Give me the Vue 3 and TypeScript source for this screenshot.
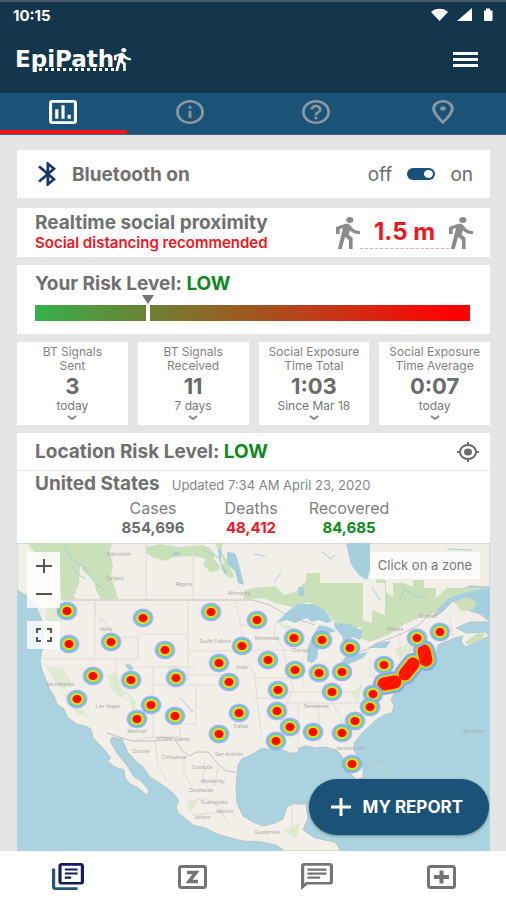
<script setup lang="ts">
import { ref } from 'vue'

interface Tab { id: string; label: string; path: string; box: string }
interface Tile { title: string[]; value: string; period: string }
interface Total { label: string; value: string; tone: string }
interface Label { x: number; y: number; text: string }

const bluetoothOn = ref(true)
const activeTab = ref('stats')
const riskPercent = 26

const walkPath =
  'M13.5 5.5c1.1 0 2-.9 2-2s-.9-2-2-2-2 .9-2 2 .9 2 2 2zM9.8 8.9L7 23h2.1l1.8-8 2.1 2v6h2v-7.5l-2.1-2 .6-3C14.8 12 16.8 13 19 13v-2c-1.9 0-3.5-1-4.3-2.4l-1-1.6c-.4-.6-1-1-1.7-1-.3 0-.5.1-.8.1L6 8.3V13h2V9.6l1.8-.7'

const tabs: Tab[] = [
  { id: 'stats', label: 'Statistics', box: '3 3 18 18', path: 'M19 3H5c-1.1 0-2 .9-2 2v14c0 1.1.9 2 2 2h14c1.1 0 2-.9 2-2V5c0-1.1-.9-2-2-2zm0 16H5V5h14v14zM7 10h2v7H7zm4-3h2v10h-2zm4 7h2v3h-2z' },
  { id: 'info', label: 'Information', box: '2 2 20 20', path: 'M11 7h2v2h-2zm0 4h2v6h-2zm1-9C6.48 2 2 6.48 2 12s4.48 10 10 10 10-4.48 10-10S17.52 2 12 2zm0 18c-4.41 0-8-3.59-8-8s3.59-8 8-8 8 3.59 8 8-3.59 8-8 8z' },
  { id: 'help', label: 'Help', box: '2 2 20 20', path: 'M11 18h2v-2h-2v2zm1-16C6.48 2 2 6.48 2 12s4.48 10 10 10 10-4.48 10-10S17.52 2 12 2zm0 18c-4.41 0-8-3.59-8-8s3.59-8 8-8 8 3.59 8 8-3.59 8-8 8zm0-14c-2.21 0-4 1.79-4 4h2c0-1.1.9-2 2-2s2 .9 2 2c0 2-3 1.75-3 5h2c0-2.25 3-2.5 3-5 0-2.21-1.79-4-4-4z' },
  { id: 'place', label: 'Places', box: '3 2 18 20', path: 'M12 2C8.13 2 5 5.13 5 9c0 5.25 7 13 7 13s7-7.75 7-13c0-3.87-3.13-7-7-7zM7 9c0-2.76 2.24-5 5-5s5 2.24 5 5c0 2.88-2.88 7.19-5 9.88C9.92 16.21 7 11.85 7 9zM12 7.2a1.8 1.8 0 1 0 0 3.6a1.8 1.8 0 1 0 0-3.6z' },
]

const tiles: Tile[] = [
  { title: ['BT Signals', 'Sent'], value: '3', period: 'today' },
  { title: ['BT Signals', 'Received'], value: '11', period: '7 days' },
  { title: ['Social Exposure', 'Time Total'], value: '1:03', period: 'Since Mar 18' },
  { title: ['Social Exposure', 'Time Average'], value: '0:07', period: 'today' },
]

const totals: Total[] = [
  { label: 'Cases', value: '854,696', tone: 'plain' },
  { label: 'Deaths', value: '48,412', tone: 'bad' },
  { label: 'Recovered', value: '84,685', tone: 'good' },
]

const spots: [number, number][] = [
  [67, 611], [143, 618], [211, 612], [257, 620], [69, 644], [111, 642], [165, 650], [242, 646],
  [219, 663], [268, 660], [93, 676], [131, 680], [176, 678], [229, 682], [77, 699], [151, 705],
  [137, 719], [175, 716], [239, 713], [219, 734], [294, 638], [322, 640], [350, 648], [295, 670],
  [319, 673], [342, 672], [384, 665], [278, 690], [332, 692], [277, 711], [373, 694], [370, 707],
  [290, 727], [355, 721], [276, 741], [313, 732], [342, 733], [352, 764], [417, 638], [440, 632],
]

const cluster = 'M384 684L395 682M405 674L413 664M424 651L426 660'
const clusterLayers = [
  { color: '#a09cf2', width: 22 },
  { color: '#5cc4de', width: 19 },
  { color: '#9be03c', width: 17 },
  { color: '#ffd200', width: 15 },
  { color: '#ff1400', width: 13 },
]

const labels: Label[] = [
  { x: 119, y: 556, text: 'Edmonton' }, { x: 115, y: 580, text: 'Calgary' }, { x: 184, y: 586, text: 'Regina' },
  { x: 239, y: 595, text: 'Winnipeg' }, { x: 106, y: 631, text: 'Idaho' }, { x: 215, y: 643, text: 'South Dakota' },
  { x: 242, y: 669, text: 'Iowa' }, { x: 60, y: 686, text: 'Sacramento' }, { x: 108, y: 708, text: 'Las Vegas' },
  { x: 137, y: 733, text: 'Mexicali' }, { x: 173, y: 741, text: 'Ciudad Juárez' }, { x: 141, y: 753, text: 'Sonora' },
  { x: 174, y: 759, text: 'Chihuahua' }, { x: 229, y: 756, text: 'San Antonio' }, { x: 202, y: 769, text: 'Coahuila' },
  { x: 213, y: 783, text: 'Monterrey' }, { x: 201, y: 792, text: 'Zacatecas' }, { x: 214, y: 804, text: 'Guanajuato' },
  { x: 225, y: 813, text: 'México' }, { x: 202, y: 819, text: 'Jalisco' }, { x: 267, y: 834, text: 'Guatemala' },
  { x: 267, y: 640, text: 'Minnesota' }, { x: 301, y: 652, text: 'Chicago' }, { x: 316, y: 708, text: 'Tennessee' },
  { x: 395, y: 631, text: 'Ottawa' }, { x: 428, y: 618, text: 'Québec' },
  { x: 474, y: 733, text: 'Bermuda' }, { x: 350, y: 750, text: 'Jacksonville' }, { x: 241, y: 728, text: 'Dallas' },
]
</script>

<template>
  <div class="app">
    <header class="top">
      <div class="status">
        <span class="clock">10:15</span>
        <svg class="status-icons" viewBox="0 0 62 14" aria-hidden="true">
          <path d="M0 4C4 -0.5 13 -0.5 17 4L8.5 13z" />
          <path d="M26 13L41 0V13z" />
          <path d="M53 2.5h2V0.5h4v2h2.5V12a1 1 0 0 1-1 1h-6.500a1 1 0 0 1-1-1z" />
        </svg>
      </div>
      <div class="brand-row">
        <h1 class="brand">
          <span class="brand-name">EpiPath</span>
          <svg class="brand-walk" viewBox="6 1.5 13 21.5" preserveAspectRatio="none" aria-hidden="true"><path :d="walkPath" /></svg>
        </h1>
        <button class="menu" type="button" aria-label="Menu"><i></i><i></i><i></i></button>
      </div>
    </header>

    <nav class="tabs" aria-label="Sections">
      <button
        v-for="tab in tabs" :key="tab.id" type="button" class="tab"
        :class="{ active: tab.id === activeTab }" :aria-label="tab.label" @click="activeTab = tab.id"
      >
        <svg :viewBox="tab.box" preserveAspectRatio="none"><path fill-rule="evenodd" :d="tab.path" /></svg>
      </button>
    </nav>

    <main class="content">
      <section class="card bluetooth">
        <svg class="bt-icon" viewBox="5 2 12.71 20" preserveAspectRatio="none" aria-hidden="true">
          <path d="M17.71 7.71L12 2h-1v7.59L6.41 5 5 6.41 10.59 12 5 17.59 6.41 19 11 14.41V22h1l5.71-5.71-4.3-4.29 4.3-4.29zM13 5.83l1.88 1.88L13 9.59V5.83zm1.88 10.46L13 18.17v-3.76l1.88 1.88z" />
        </svg>
        <label class="heading" for="bt-switch">Bluetooth on</label>
        <div class="switch-group">
          <span>off</span>
          <input id="bt-switch" v-model="bluetoothOn" class="switch" type="checkbox" role="switch">
          <span>on</span>
        </div>
      </section>

      <section class="card proximity">
        <div>
          <h2 class="heading">Realtime social proximity</h2>
          <p class="advice">Social distancing recommended</p>
        </div>
        <div class="distance">
          <svg class="walker" viewBox="6 1.5 13 21.5" preserveAspectRatio="none" aria-hidden="true"><path :d="walkPath" /></svg>
          <strong>1.5 m</strong>
          <svg class="walker" viewBox="6 1.5 13 21.5" preserveAspectRatio="none" aria-hidden="true"><path :d="walkPath" /></svg>
        </div>
      </section>

      <section class="card risk">
        <h2 class="heading">Your Risk Level: <span class="low">LOW</span></h2>
        <div class="gauge">
          <div class="marker" :style="{ left: riskPercent + '%' }"></div>
        </div>
      </section>

      <section class="tiles">
        <button v-for="tile in tiles" :key="tile.title.join(' ')" type="button" class="tile">
          <span v-for="line in tile.title" :key="line" class="tile-title">{{ line }}</span>
          <strong>{{ tile.value }}</strong>
          <span class="period">{{ tile.period }}</span>
          <svg viewBox="0 0 10 5" aria-hidden="true"><path d="M1 1l4 3 4-3" /></svg>
        </button>
      </section>

      <section class="location">
        <div class="location-head">
          <h2 class="heading">Location Risk Level: <span class="low">LOW</span></h2>
          <button type="button" class="locate" aria-label="Use my location">
            <svg viewBox="0 0 24 20" preserveAspectRatio="none">
              <ellipse cx="12" cy="10" rx="8" ry="7" fill="none" stroke="currentColor" stroke-width="2" />
              <ellipse cx="12" cy="10" rx="4" ry="3.5" />
              <path d="M11 0h2v3h-2zM11 17h2v3h-2zM1 9h3v2H1zM20 9h3v2h-3z" />
            </svg>
          </button>
        </div>
        <div class="region">
          <div class="region-title">
            <h3 class="heading">United States</h3>
            <span>Updated 7:34 AM April 23, 2020</span>
          </div>
          <dl class="totals">
            <div v-for="total in totals" :key="total.label">
              <dt>{{ total.label }}</dt>
              <dd :class="total.tone">{{ total.value }}</dd>
            </div>
          </dl>
        </div>
        <div class="map">
          <svg class="map-art" viewBox="17 543 473 308" preserveAspectRatio="xMidYMid slice" role="img" aria-label="Heat map of the United States">
            <defs>
              <radialGradient id="heat">
                <stop offset="0" stop-color="#e80000" />
                <stop offset="0.36" stop-color="#ff1200" />
                <stop offset="0.45" stop-color="#ffc400" />
                <stop offset="0.55" stop-color="#d0e840" />
                <stop offset="0.66" stop-color="#58d490" />
                <stop offset="0.76" stop-color="#7cc0ec" />
                <stop offset="0.88" stop-color="#9c96f2" stop-opacity="0.75" />
                <stop offset="1" stop-color="#b0a8f6" stop-opacity="0" />
              </radialGradient>
            </defs>
            <path class="land" d="M17 543H490V587L470 586 452 593 441 604 433 617 442 612 452 602 465 602 470 611 480 614 490 622 470 622 456 628 466 633 486 632 489 636 466 647 461 642 463 636 455 638 445 642 438 645 435 655 430 659 420 668 411 675 400 687 395 692 391 699 394 706 392 713 384 715 376 720 363 732 354 743 354 751 360 760 363 768 363 777 357 780 350 773 345 765 342 756 336 750 325 747 316 748 306 746 299 748 297 753 290 753 283 750 273 750 262 748 253 754 242 759 238 765 236 787 237 803 243 816 253 822 263 826 275 823 283 819 287 807 292 804 306 804 308 818 303 830 315 838 335 842 341 851H285L276 845 262 842 243 841 220 835 205 828 193 825 186 819 178 813 176 807 179 801 174 794 167 788 156 781 150 777 143 767 136 761 128 753 122 739 112 737 110 741 117 753 128 767 134 777 140 780 149 790 147 795 137 787 130 784 125 778 124 770 115 767 107 761 111 758 107 753 101 746 93 738 91 729 85 726 77 724 68 718 64 709 57 704 54 696 50 690 46 680 43 673 40 662 42 650 43 635 42 620 38 611 34 603 27 596 17 590z" />
            <g class="forest">
              <path d="M27 543H112L110 552 113 566 111 576 115 588 118 599H101L96 590 94 580 84 572 80 564 79 584 74 596 76 599H61L60 573 50 563 42 556 34 552z" />
              <path d="M146 547l14-3 20 3 22-2 8 3 6 8-3 2 7 8-2 5-8 1-7-8 3-5-12-3-20 1-8 4-12-3-8-5z" />
              <path d="M215 543h8l-2 8 9 15 4 11-5 1-8-9 3-7zM245 590l11-2v11h-13z" />
              <path d="M253 588L275 586 284 595 297 591 303 583H306V573H320V583H363V620L372 623V610L385 615V583H376V579L386 580V592L393 597V583H405L413 587V580H424V588H436V598L447 588H470L490 587 470 591 451 597 434 613 421 617 405 624 390 634 370 642 359 638 361 627 350 628 335 623 325 610 308 602 292 607 275 603 263 598 253 599z" />
              <path d="M454 602l12-5 12 5-5 8-12 1zM465 642l13-9 7 1-4 6-13 5z" />
              <path class="pale" d="M47 603l12-2 5 7-2 14-10 1-4 20-4-2zM98 620l5-3-2 6zM45 665l18 4 10 17-12 3zM107 676l8-5 7 17 6 6-9 3-8-8zM60 691l14 8 15 18-13-4zM167 666l10-1 5 14-9 6zM126 691l10 11-3 9zM393 650l13-6 8 3-10 14zM350 694l13-11-5 20zM275 622l15 4 9 6-14-3zM284 831l17-9-5 17zM187 805l12-8-8 14z" />
            </g>
            <g class="water">
              <path d="M346 543H370V571L367 580 360 576 351 565zM227 552l8 1 4 11 5 21-6-2-3-12-8-7zM218 548l4 3-2 12 7 8-2 4-6-14zM298 587l6 1v8h-5zM172 553l6-2 2 3-7 2z" />
              <path d="M276 623l12-12 10-7 15 0 11 5 8 12-5 2-8-3-8 2-4-4-12 5-8-3z" />
              <path d="M307 661l1-14 4-10 7-12 10 2 7 4-12 4-5 10-2 14-5 4zM334 623l15 1 14 7-3 9-8-3-6 7-4-8-7-8zM338 666l8-10 22-4-5 6-14 6zM368 648l8-5 15-2-5 7zM439 607l12-9 15-5 24-2v24l-18-3 5-10-9-6-14 2-11 13zM125 665l3-2 6 5-4 3-4-4z" />
            </g>
            <g class="rivers">
              <path d="M63 545l11 16 12 8 7 12 13 11M70 563l9 12 7 4M203 550l17 8 3 10M402 587l13 9 12 2M405 588l-6 13M372 587l9 14M322 552l9 7 4-4M254 554l11 2M274 582l7-9M434 562l18-3M385 568l5-4M447 549l25 1M428 700l-5 4M180 698l13 14" />
            </g>
            <path class="islands" d="M371 769q8-6 15 0l3 6M375 781l11-2 3 5M270 807l4-4M129 820l2-1M82 755l5-1" />
            <path class="borders" d="M43 659H137M95 602v56M95 602v12l8 6 8 12 6 5h20M138 660v-26M138 634h50M188 602v80M137 667h58M116 659v32l12 10M153 668v70M153 685h87M196 687v37h-16v13H153l-21 4-25-8M188 651h50M188 675h45M236 602l6 30 3 25 10 18 2 23 4 36M240 625h25M247 650h42M251 678h38M253 698h35M275 625l-1 10 10 14 4 24 5 16-9 20-4 15 4 19M303 658v29M325 661v24M285 692h70M287 703h74M298 703v43M318 703l2 43M333 703l14 29M370 657v19h30M400 633v29M450 618l3 19M146 543v58M193 543v59" />
            <path class="nation" d="M62 600H253L270 605 290 617 315 625M343 638l4 16 19-4 12-7 25-10 16-8 13-13M107 733l25 8h24l5-4 13 1 7 11 9 7 6-4h12l10 12 8 7 10 1" />
            <path class="borders" d="M155 741l3 25 9 14M184 754v20l8 13M205 757l-2 23 8 12M218 767l-3 18M188 802l18-4 13 9M192 815l29-3 9 12M292 804v24" />
            <g class="names">
              <text v-for="item in labels" :key="item.text" :x="item.x" :y="item.y">{{ item.text }}</text>
            </g>
            <path
              v-for="layer in clusterLayers" :key="layer.width" class="cluster" :d="cluster"
              :stroke="layer.color" :stroke-width="layer.width"
            />
            <ellipse v-for="spot in spots" :key="spot.join()" :cx="spot[0]" :cy="spot[1]" rx="11" ry="10" fill="url(#heat)" />
          </svg>
          <div class="map-tools">
            <div class="zoom">
              <button type="button" aria-label="Zoom in"><svg viewBox="0 0 16 14"><path d="M0 7h16M8 0v14" /></svg></button>
              <button type="button" aria-label="Zoom out"><svg viewBox="0 0 16 14"><path d="M0 7h16" /></svg></button>
            </div>
            <button type="button" class="full" aria-label="Full screen">
              <svg viewBox="0 0 16 14"><path d="M1 5V1h4M11 1h4v4M15 9v4h-4M5 13H1V9" /></svg>
            </button>
          </div>
          <p class="hint">Click on a zone</p>
          <button type="button" class="report">
            <svg viewBox="0 0 20 18" aria-hidden="true"><path d="M0 9h20M10 0v18" /></svg>
            MY REPORT
          </button>
        </div>
      </section>
    </main>

    <nav class="bottom" aria-label="Main">
      <a href="#library" aria-label="Library" class="current">
        <svg class="wide" viewBox="2 2 20 20" preserveAspectRatio="none">
          <path class="shade" d="M4 6H2v14c0 1.1.9 2 2 2h14v-2H4V6z" />
          <path d="M20 2H8c-1.1 0-2 .9-2 2v12c0 1.1.9 2 2 2h12c1.1 0 2-.9 2-2V4c0-1.1-.9-2-2-2zm0 14H8V4h12v12zM10 9h8v1.6h-8zm0 3h4v1.6h-4zm0-6h8v1.6h-8z" />
        </svg>
      </a>
      <a href="#zones" aria-label="Zones">
        <svg viewBox="0 0 29 24">
          <rect x="1.5" y="1.5" width="26" height="21" rx="2" />
          <path d="M9 7.5H18L11 16.5H20" stroke-width="3.5" />
        </svg>
      </a>
      <a href="#messages" aria-label="Messages">
        <svg class="wide" viewBox="2 2 20 20" preserveAspectRatio="none">
          <path d="M4 4h16v12H5.17L4 17.17V4m0-2c-1.1 0-1.99.9-1.99 2L2 22l4-4h14c1.1 0 2-.9 2-2V4c0-1.1-.9-2-2-2H4zm2 10h8v1.7H6zm0-3h12v1.7H6zm0-3h12v1.7H6z" />
        </svg>
      </a>
      <a href="#health" aria-label="Health">
        <svg viewBox="0 0 29 24">
          <rect x="1.5" y="1.5" width="26" height="21" rx="2" />
          <path d="M7 12H22M14.5 5.5V18.5" stroke-width="4" />
        </svg>
      </a>
    </nav>
  </div>
</template>

<style>
body { background: #e5e5e5; }
</style>

<style scoped>
* { box-sizing: border-box; }
h1, h2, h3, p, dl, dd { margin: 0; }
button { border: 0; padding: 0; background: none; color: inherit; font: inherit; cursor: pointer; }
svg { display: block; }

.app {
  display: flex;
  flex-direction: column;
  min-height: 100vh;
  background: #e5e5e5;
  color: #6b6b6b;
  font-family: Inter, Roboto, sans-serif;
}

.top { height: 93px; border-top: 2px solid #4a5c69; background: #14364c; color: #fff; }
.status { display: flex; align-items: center; justify-content: space-between; height: 26px; padding: 0 13px; }
.clock { font-size: 15px; font-weight: 700; }
.status-icons { width: 62px; height: 14px; fill: #fff; }
.brand-row { display: flex; align-items: center; justify-content: space-between; height: 62px; padding: 0 28px 0 15px; }
.brand { display: flex; align-items: center; font-family: "DejaVu Sans", sans-serif; font-size: 23px; line-height: 24px; }
.brand-name { position: relative; }
.brand-name::after { content: ""; position: absolute; left: 24px; right: 0; bottom: 0; border-bottom: 3px dotted #fff; }
.brand-walk { width: 17px; height: 23px; fill: #fff; }
.menu { display: flex; flex-direction: column; gap: 3px; }
.menu i { width: 25px; height: 3px; background: #fff; }

.tabs { display: grid; grid-template-columns: repeat(4, 1fr); height: 42px; background: #1b5277; border-bottom: 1px solid #3b6785; }
.tab { display: grid; place-items: center; border-bottom: 4px solid transparent; color: #8c979e; }
.tab.active { border-color: #f0141c; color: #fff; }
.tab svg { width: 28px; height: 24px; fill: currentColor; }

.content { display: flex; flex: 1; flex-direction: column; gap: 8px; padding: 15px 16px 0 17px; }
.card { background: #fff; }
.heading { font-size: 19px; font-weight: 700; line-height: 21px; color: #707070; }
.low { color: #0c8a1c; }

.bluetooth { display: flex; align-items: center; height: 48px; margin-bottom: 2px; padding: 0 17px 0 21px; }
.bt-icon { width: 18px; height: 24px; margin-right: 16px; fill: #173768; }
.switch-group { display: flex; align-items: center; gap: 15px; margin-left: auto; font-size: 19px; }
.switch { appearance: none; display: flex; align-items: center; width: 28px; height: 12px; margin: 0; padding: 2px; border-radius: 6px; background: #8a8a8a; cursor: pointer; }
.switch::before { content: ""; width: 9px; height: 8px; border-radius: 50%; background: #fff; }
.switch:checked { justify-content: flex-end; background: #1b4f7c; }

.proximity { display: flex; align-items: center; justify-content: space-between; height: 49px; padding: 0 17px 0 18px; }
.advice { color: #f5141c; font-size: 15px; font-weight: 600; line-height: 20px; }
.distance { display: flex; align-items: flex-end; }
.walker { width: 24px; height: 32px; fill: #8b8b8b; }
.distance strong { width: 89px; padding-bottom: 4px; border-bottom: 1px dashed #f6a0a8; color: #f5141c; font-size: 24px; font-weight: 700; line-height: 24px; text-align: center; }

.risk { height: 69px; padding: 8px 20px 0 18px; }
.gauge { position: relative; height: 16px; margin-top: 11px; background: linear-gradient(90deg, #35b04a, #a05620 50%, #c63618 68%, #ff0000 96%); }
.marker { position: absolute; top: 0; bottom: 0; width: 4px; margin-left: -2px; background: #fff; }
.marker::before { content: ""; position: absolute; left: -4px; top: -10px; border: 6px solid transparent; border-top: 9px solid #747474; border-bottom: 0; }

.tiles { display: grid; grid-template-columns: repeat(4, 1fr); gap: 10px; }
.tile { display: flex; flex-direction: column; align-items: center; height: 83px; padding-top: 3px; background: #fff; white-space: nowrap; }
.tile-title { color: #828282; font-size: 12px; line-height: 14px; }
.tile strong { font-size: 22px; font-weight: 700; line-height: 26px; }
.period { color: #777; font-size: 12px; line-height: 14px; }
.tile svg { width: 10px; height: 5px; margin-top: 2px; fill: none; stroke: #888; stroke-width: 2; }

.location { display: flex; flex: 1; flex-direction: column; background: #fff; }
.location-head { display: flex; align-items: center; justify-content: space-between; height: 38px; padding: 0 10px 0 18px; border-bottom: 1px solid #e8e8e8; }
.locate svg { width: 24px; height: 20px; fill: currentColor; }
.region { height: 72px; padding-top: 2px; }
.region-title { display: flex; align-items: baseline; gap: 12px; padding-left: 18px; font-size: 13px; color: #858585; }
.totals { display: grid; grid-template-columns: repeat(3, 98px); justify-content: center; margin-top: 5px; padding-right: 5px; text-align: center; }
.totals dt { font-size: 16px; line-height: 19px; color: #808080; }
.totals dd { font-size: 15px; font-weight: 700; line-height: 19px; }
.bad { color: #f5141c; }
.good { color: #0c8a1c; }

.map { position: relative; flex: 1; min-height: 308px; overflow: hidden; background: #aad3df; }
.map-art { position: absolute; inset: 0; width: 100%; height: 100%; }
.land { fill: #f2efe9; stroke: #b7c6cc; stroke-width: 1; }
.forest { fill: #c9e0b9; }
.pale { fill: #deead1; }
.water { fill: #a5cfdd; }
.rivers { fill: none; stroke: #a5cfdd; stroke-width: 1; }
.islands { fill: none; stroke: #c7d8d7; stroke-width: 1; }
.borders { fill: none; stroke: #e2dadb; stroke-width: 1; }
.nation { fill: none; stroke: #c9c0c4; stroke-width: 1; }
.names { fill: #ababab; font-size: 5px; text-anchor: middle; }
.cluster { fill: none; stroke-linecap: round; stroke-linejoin: round; }
.map-tools { position: absolute; left: 10px; top: 9px; display: grid; gap: 13px; }
.zoom, .full { width: 33px; background: rgba(255, 255, 255, 0.8); }
.zoom { height: 56px; }
.map-tools button { display: grid; place-items: center; width: 33px; height: 28px; }
.map-tools svg { width: 16px; height: 14px; fill: none; stroke: #555; stroke-width: 2; }
.hint { position: absolute; right: 10px; top: 9px; padding: 0 8px; background: rgba(255, 255, 255, 0.75); color: #777; font-size: 13px; line-height: 27px; }
.report {
  position: absolute; right: 1px; bottom: 16px; display: flex; align-items: center; gap: 12px;
  height: 56px; padding: 0 26px 0 22px; border-radius: 28px; background: #1b5277;
  box-shadow: 0 1px 3px rgba(0, 0, 0, 0.4); color: #fff; font-size: 17px; font-weight: 700;
}
.report svg { width: 20px; height: 18px; fill: none; stroke: #fff; stroke-width: 3; }

.bottom { display: grid; grid-template-columns: repeat(4, 1fr); height: 49px; padding: 2px 2px 0 6px; background: #fff; }
.bottom a { display: grid; place-items: center; color: #747474; }
.bottom svg { width: 29px; height: 24px; fill: none; stroke: currentColor; stroke-width: 3; }
.bottom .wide { width: 32px; height: 27px; stroke: none; fill: currentColor; }
.bottom .current { color: #171d5c; }
.shade { fill: #265580; }
</style>
